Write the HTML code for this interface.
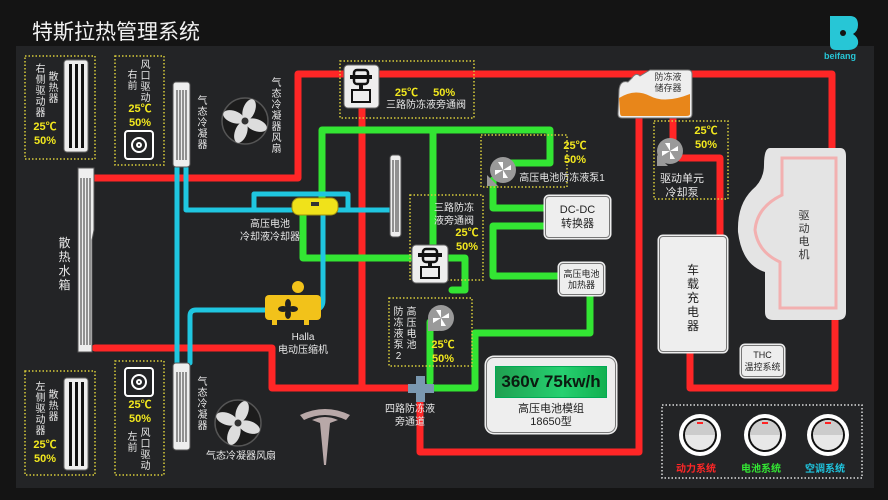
<!DOCTYPE html>
<html><head><meta charset="utf-8"><style>
body{margin:0;background:#141414;width:888px;height:500px;overflow:hidden;font-family:"Liberation Sans","Noto Sans CJK SC",sans-serif;}
#p{position:absolute;left:16px;top:46px;width:858px;height:442px;background:#232426;}
.a{position:absolute;}
.v{position:absolute;width:11px;word-break:break-all;text-align:center;color:#e8e8e8;font-size:10px;line-height:11px;}
.y{color:#f2e81e;font-weight:bold;font-size:11px;line-height:14px;text-align:center;}
.w{color:#e8e8e8;font-size:10px;line-height:13px;text-align:center;}
.box{position:absolute;background:#eeeeee;border:1.5px solid #777;border-radius:4px;box-shadow:0 0 0 1.5px #eee;color:#222;text-align:center;box-sizing:border-box;}
</style></head><body>
<div class="a" style="left:32px;top:16px;color:#f2f2f2;font-size:21px;">特斯拉热管理系统</div>
<div id="p"></div>
<svg class="a" style="left:0;top:0" width="888" height="500" viewBox="0 0 888 500">
<g fill="none" stroke-linejoin="round" stroke-linecap="round">
<g stroke="#ff2626" stroke-width="7">
<path d="M95 178 H298 V74 H832 V150"/>
<path d="M362 74 V388"/>
<path d="M95 348 H272 V388 H412"/>
<path d="M420 395 V452 H639 V110"/>
<path d="M673 115 V150"/>
<path d="M680 158 H720 V238"/>
<path d="M690 350 V388 H835 V318"/>
</g>
<g stroke="#33e533" stroke-width="7">
<path d="M322 200 V130 H550 V163 H510"/>
<path d="M433 130 V246"/>
<path d="M303 214 V258 H412"/>
<path d="M448 258 H465 V290 H452"/>
<path d="M430 322 V382"/>
<path d="M430 388 H475 V333 H590 V292"/>
<path d="M493 180 V208 H545"/>
<path d="M545 226 H493 V276 H558"/>
</g>
<g stroke="#1fc6e0" stroke-width="5">
<path d="M177 168 V363"/>
<path d="M186 168 V210 H292"/>
<path d="M254 210 V194 H348 V210"/>
<path d="M338 210 H392"/>
<path d="M323 214 V300 Q323 310 313 310"/>
<path d="M265 310 H196 Q190 310 190 316 V363"/>
</g>
</g>
<g fill="none" stroke="#d8cc3a" stroke-width="1.5" stroke-dasharray="1.5 2">
<rect x="25" y="56" width="70" height="103"/>
<rect x="115" y="56" width="49" height="109"/>
<rect x="25" y="371" width="70" height="104"/>
<rect x="115" y="361" width="49" height="114"/>
<rect x="340" y="61" width="134" height="57"/>
<rect x="481" y="135" width="86" height="52"/>
<rect x="410" y="195" width="73" height="85"/>
<rect x="389" y="298" width="83" height="68"/>
<rect x="654" y="121" width="74" height="78"/>
</g>
<rect x="662" y="405" width="200" height="73" fill="none" stroke="#ddd" stroke-width="1.5" stroke-dasharray="1.5 2"/>
<g>
<rect x="64" y="60" width="24" height="92" rx="3" fill="#eee" stroke="#666"/>
<g fill="#111"><rect x="69" y="64" width="3" height="84"/><rect x="75" y="64" width="3" height="84"/><rect x="81" y="64" width="3" height="84"/></g>
<rect x="64" y="378" width="24" height="92" rx="3" fill="#eee" stroke="#666"/>
<g fill="#111"><rect x="69" y="382" width="3" height="84"/><rect x="75" y="382" width="3" height="84"/><rect x="81" y="382" width="3" height="84"/></g>
</g>
<g stroke="#fff" fill="none" stroke-width="2">
<rect x="125" y="131" width="28" height="28" rx="3"/><circle cx="139" cy="145" r="7"/><circle cx="139" cy="145" r="2"/>
<rect x="125" y="368" width="28" height="28" rx="3"/><circle cx="139" cy="382" r="7"/><circle cx="139" cy="382" r="2"/>
</g>
<g>
<rect x="173" y="82" width="17" height="85" rx="3" fill="#eee" stroke="#555"/>
<g stroke="#333" stroke-width="1"><path d="M177 90 V160 M180 90 V160 M183 90 V160 M186 90 V160"/></g>
<rect x="173" y="363" width="17" height="87" rx="3" fill="#eee" stroke="#555"/>
<g stroke="#333" stroke-width="1"><path d="M177 372 V442 M180 372 V442 M183 372 V442 M186 372 V442"/></g>
<rect x="390" y="155" width="11" height="82" rx="3" fill="#eee" stroke="#555"/>
<g stroke="#333" stroke-width="1"><path d="M393 160 V232 M396 160 V232 M398 160 V232"/></g>
<path d="M78 168 H94 V230 L92 240 V352 H78 Z" fill="#eee" stroke="#555"/>
<g stroke="#333" stroke-width="1"><path d="M81 178 V345 M84 178 V345 M87 178 V345 M90 178 V345"/></g>
</g>
<g>
<circle cx="245" cy="121" r="23" fill="#1c1c1c" stroke="#555" stroke-width="1.5"/>
<g fill="#ddd" transform="rotate(20 245 121)"><ellipse cx="245" cy="109" rx="6" ry="11"/><ellipse cx="245" cy="133" rx="6" ry="11"/><ellipse cx="233" cy="121" rx="11" ry="6"/><ellipse cx="257" cy="121" rx="11" ry="6"/></g>
<circle cx="245" cy="121" r="4" fill="#333" stroke="#ddd"/>
<circle cx="238" cy="423" r="23" fill="#1c1c1c" stroke="#555" stroke-width="1.5"/>
<g fill="#ddd" transform="rotate(20 238 423)"><ellipse cx="238" cy="411" rx="6" ry="11"/><ellipse cx="238" cy="435" rx="6" ry="11"/><ellipse cx="226" cy="423" rx="11" ry="6"/><ellipse cx="250" cy="423" rx="11" ry="6"/></g>
<circle cx="238" cy="423" r="4" fill="#333" stroke="#ddd"/>
</g>
<rect x="292" y="198" width="46" height="17" rx="7" fill="#f0e21a" stroke="#a09010"/>
<rect x="311" y="202" width="8" height="4" fill="#333"/>
<rect x="265" y="295" width="56" height="25" rx="4" fill="#f2c21a"/>
<circle cx="298" cy="287" r="6" fill="#f2c21a"/>
<g fill="#222"><ellipse cx="288" cy="304" rx="3" ry="5"/><ellipse cx="288" cy="314" rx="3" ry="5"/><ellipse cx="283" cy="309" rx="5" ry="3"/><ellipse cx="293" cy="309" rx="5" ry="3"/></g>
<rect x="272" y="320" width="5" height="5" fill="#f2c21a"/><rect x="304" y="320" width="5" height="5" fill="#f2c21a"/>
<g>
<rect x="344" y="65" width="35" height="43" rx="4" fill="#eee" stroke="#666"/>
<rect x="354" y="70" width="14" height="14" rx="3" fill="none" stroke="#111" stroke-width="2.5"/><rect x="350" y="75" width="22" height="4" fill="#111"/>
<rect x="359" y="84" width="4" height="6" fill="#111"/><rect x="352" y="90" width="18" height="12" fill="none" stroke="#111" stroke-width="2"/>
<rect x="412" y="245" width="36" height="38" rx="4" fill="#eee" stroke="#666"/>
<rect x="423" y="249" width="14" height="13" rx="3" fill="none" stroke="#111" stroke-width="2.5"/><rect x="418" y="253" width="24" height="4" fill="#111"/>
<rect x="428" y="262" width="4" height="5" fill="#111"/><rect x="421" y="267" width="18" height="11" fill="none" stroke="#111" stroke-width="2"/>
</g>
<g>
<path d="M487 175 V186 H498 Z" fill="#999"/><circle cx="503" cy="170" r="13" fill="#9a9a9a"/>
<path d="M428 320 V331 H439 Z" fill="#999"/><circle cx="441" cy="318" r="13" fill="#9a9a9a"/>
<path d="M657 155 V166 H668 Z" fill="#999"/><circle cx="670" cy="151" r="13" fill="#9a9a9a"/>
<g fill="#fff"><path d="M503 170 l-5 -8 h5z M503 170 l8 -5 v5z M503 170 l5 8 h-5z M503 170 l-8 5 v-5z"/>
<path d="M441 318 l-5 -8 h5z M441 318 l8 -5 v5z M441 318 l5 8 h-5z M441 318 l-8 5 v-5z"/>
<path d="M670 151 l-5 -8 h5z M670 151 l8 -5 v5z M670 151 l5 8 h-5z M670 151 l-8 5 v-5z"/></g>
</g>
<g fill="#7a98b0"><rect x="408" y="384" width="26" height="9"/><rect x="416" y="376" width="9" height="26"/></g>
<path d="M619 90 Q620 80 628 82 L632 78 Q636 72 640 76 L650 70 H688 Q692 70 692 74 V114 Q692 118 688 118 H622 Q618 118 618 114 Z" fill="#eee" stroke="#777"/>
<path d="M619 98 Q635 88 650 96 T690 94 V114 Q690 116 686 116 H622 Q620 116 620 112 Z" fill="#e8861a"/>
<path d="M770 148 H840 Q846 148 846 156 V312 Q846 320 838 320 H773 Q765 320 765 312 V272 Q742 265 738 232 Q737 205 752 190 Q764 180 764 165 Q764 148 770 148 Z" fill="#e4e4e4"/>
<path d="M782 158 H836 V308 H780 V262 Q758 252 755 230 Q757 207 782 195 Z" fill="none" stroke="#f2b0b0" stroke-width="3"/>
<path d="M300 415 Q325 403 350 415 L346 420 Q325 410 304 420 Z" fill="#b8a8a8"/>
<path d="M312 420 Q325 414 338 420 L330 423 L326 465 L324 465 L320 423 Z" fill="#b8a8a8"/>
<g>
<circle cx="700" cy="435" r="21" fill="#fff"/><circle cx="700" cy="435" r="17" fill="#111"/><circle cx="700" cy="435" r="15" fill="#e8e8e8"/><path d="M685 435 A15 15 0 0 1 715 435Z" fill="#ccc"/><rect x="697" y="422" width="6" height="2" fill="#f22"/>
<circle cx="765" cy="435" r="21" fill="#fff"/><circle cx="765" cy="435" r="17" fill="#111"/><circle cx="765" cy="435" r="15" fill="#e8e8e8"/><path d="M750 435 A15 15 0 0 1 780 435Z" fill="#ccc"/><rect x="762" y="422" width="6" height="2" fill="#f22"/>
<circle cx="828" cy="435" r="21" fill="#fff"/><circle cx="828" cy="435" r="17" fill="#111"/><circle cx="828" cy="435" r="15" fill="#e8e8e8"/><path d="M813 435 A15 15 0 0 1 843 435Z" fill="#ccc"/><rect x="825" y="422" width="6" height="2" fill="#f22"/>
</g>
<path d="M830 16 H850 Q858 16 858 25 Q858 31 853 34 Q859 38 858 44 Q856 50 848 50 H836 Q830 50 830 44 Z" fill="#27c6d6"/>
<circle cx="843" cy="33" r="3" fill="#141414"/>
</svg>
<div class="a" style="left:824px;top:51px;color:#27c6d6;font-size:9px;font-weight:bold;">beifang</div>

<div class="v" style="left:35px;top:64px;">右侧驱动器</div>
<div class="v" style="left:48px;top:72px;">散热器</div>
<div class="a y" style="left:28px;top:120px;width:34px;">25℃<br>50%</div>
<div class="v" style="left:127px;top:70px;">右前</div>
<div class="v" style="left:140px;top:60px;">风口驱动</div>
<div class="a y" style="left:120px;top:102px;width:40px;">25℃<br>50%</div>
<div class="v" style="left:197px;top:96px;">气态冷凝器</div>
<div class="v" style="left:271px;top:78px;">气态冷凝器风扇</div>
<div class="v" style="left:58px;top:236px;font-size:12px;line-height:14px;width:13px;">散热水箱</div>
<div class="v" style="left:35px;top:382px;">左侧驱动器</div>
<div class="v" style="left:48px;top:390px;">散热器</div>
<div class="a y" style="left:28px;top:438px;width:34px;">25℃<br>50%</div>
<div class="a y" style="left:120px;top:398px;width:40px;">25℃<br>50%</div>
<div class="v" style="left:127px;top:432px;">左前</div>
<div class="v" style="left:140px;top:428px;">风口驱动</div>
<div class="v" style="left:197px;top:377px;">气态冷凝器</div>
<div class="a w" style="left:200px;top:450px;width:82px;">气态冷凝器风扇</div>
<div class="a w" style="left:230px;top:218px;width:80px;">高压电池<br>冷却液冷却器</div>
<div class="a w" style="left:268px;top:331px;width:70px;">Halla<br>电动压缩机</div>
<div class="a y" style="left:390px;top:86px;width:70px;word-spacing:12px;">25℃ 50%</div>
<div class="a w" style="left:380px;top:99px;width:92px;">三路防冻液旁通阀</div>
<div class="a y" style="left:555px;top:139px;width:40px;">25℃<br>50%</div>
<div class="a w" style="left:512px;top:172px;width:100px;">高压电池防冻液泵1</div>
<div class="a w" style="left:424px;top:202px;width:60px;">三路防冻<br>液旁通阀</div>
<div class="a y" style="left:447px;top:226px;width:40px;">25℃<br>50%</div>
<div class="v" style="left:406px;top:307px;">高压电池</div>
<div class="v" style="left:393px;top:307px;">防冻液泵2</div>
<div class="a y" style="left:423px;top:338px;width:40px;">25℃<br>50%</div>
<div class="a w" style="left:374px;top:403px;width:72px;">四路防冻液<br>旁通道</div>
<div class="box" style="left:545px;top:196px;width:65px;height:42px;font-size:11px;line-height:14px;padding-top:6px;">DC-DC<br>转换器</div>
<div class="box" style="left:559px;top:263px;width:45px;height:32px;font-size:9px;line-height:11px;padding-top:5px;">高压电池<br>加热器</div>
<div class="box" style="left:486px;top:357px;width:130px;height:76px;border-radius:8px;">
<div style="margin:8px 8px 0;height:30px;background:linear-gradient(90deg,#1fa050,#26d070 60%,#12b050);border:1px solid #0a5;color:#0b1b10;font-weight:bold;font-size:17px;line-height:30px;">360v 75kw/h</div>
<div style="font-size:11px;line-height:13px;margin-top:5px;">高压电池模组<br>18650型</div></div>
<div class="a" style="left:648px;top:72px;width:40px;font-size:9px;line-height:11px;color:#333;text-align:center;">防冻液<br>储存器</div>
<div class="a y" style="left:688px;top:124px;width:36px;">25℃<br>50%</div>
<div class="a w" style="left:654px;top:172px;width:56px;font-size:11px;line-height:14px;">驱动单元<br>冷却泵</div>
<div class="box" style="left:659px;top:236px;width:68px;height:116px;padding-top:26px;"><div style="width:13px;word-break:break-all;font-size:12px;line-height:14px;margin:0 auto;">车载充电器</div></div>
<div class="v" style="left:798px;top:210px;color:#333;font-size:11px;line-height:13px;width:12px;">驱动电机</div>
<div class="box" style="left:741px;top:345px;width:43px;height:32px;font-size:9px;line-height:12px;padding-top:3px;">THC<br>温控系统</div>
<div class="a" style="left:676px;top:460px;width:50px;color:#ff2626;font-size:10px;font-weight:bold;">动力系统</div>
<div class="a" style="left:741px;top:460px;width:50px;color:#33e533;font-size:10px;font-weight:bold;">电池系统</div>
<div class="a" style="left:805px;top:460px;width:50px;color:#1fc6e0;font-size:10px;font-weight:bold;">空调系统</div>
</body></html>
